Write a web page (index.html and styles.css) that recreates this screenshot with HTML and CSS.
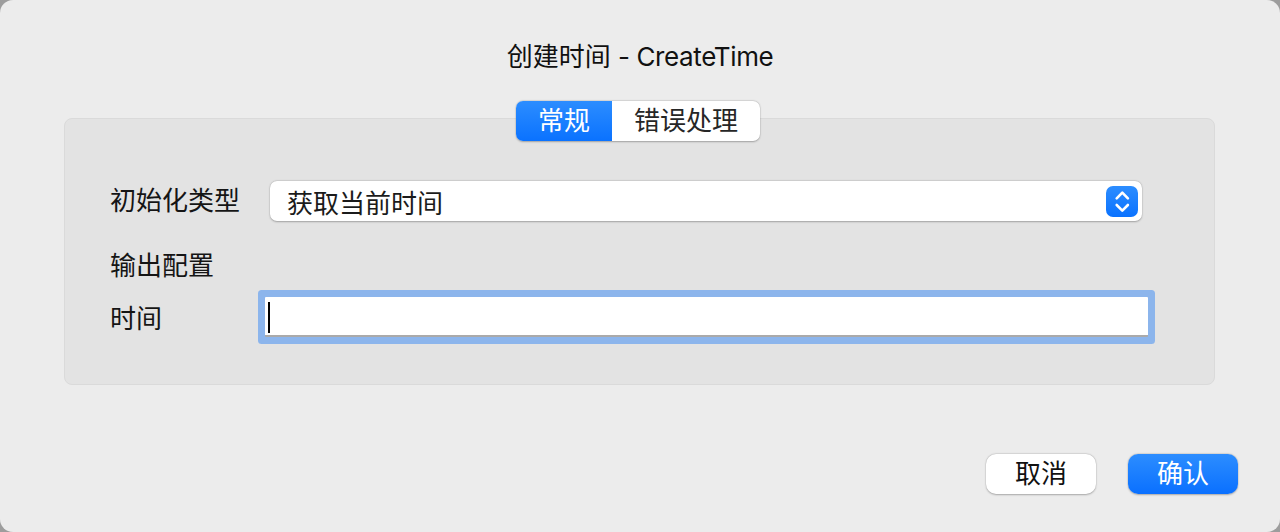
FILE: index.html
```html
<!DOCTYPE html>
<html lang="zh">
<head>
<meta charset="utf-8">
<link rel="stylesheet" href="styles.css">
</head>
<body>
<div class="window">
  <div class="title">创建时间 <span class="latin">- CreateTime</span></div>
  <div class="tabs">
    <div class="tab active">常规</div>
    <div class="tab">错误处理</div>
  </div>
  <div class="panel">
    <div class="row">
      <div class="label label-wide">初始化类型</div>
      <div class="select">
        <span class="select-text">获取当前时间</span>
        <span class="stepper">
          <svg width="32" height="31" viewBox="0 0 32 31">
            <polyline points="10.7,12.3 16.3,6.7 21.9,12.3" fill="none" stroke="#fff" stroke-width="2.6" stroke-linecap="round" stroke-linejoin="round"/>
            <polyline points="10.7,19 16.3,24.6 21.9,19" fill="none" stroke="#fff" stroke-width="2.6" stroke-linecap="round" stroke-linejoin="round"/>
          </svg>
        </span>
      </div>
    </div>
    <div class="section">输出配置</div>
    <div class="row row-input">
      <div class="label label-narrow">时间</div>
      <div class="input"><span class="caret"></span></div>
    </div>
  </div>
  <div class="buttons">
    <div class="btn">取消</div>
    <div class="btn primary">确认</div>
  </div>
</div>
</body>
</html>
```
FILE: styles.css
```css
html, body {
  margin: 0;
  padding: 0;
  background: #9d9d9d;
}
body {
  width: 1280px;
  height: 532px;
  overflow: hidden;
  font-family: Inter, "Noto Sans CJK SC", sans-serif;
  font-size: 26px;
  color: #1b1b1b;
}
.window {
  width: 1280px;
  height: 532px;
  background: #ececec;
  border-radius: 13px;
  display: flex;
  flex-direction: column;
  box-sizing: border-box;
}
.title {
  margin-top: 42px;
  height: 30px;
  line-height: 30px;
  text-align: center;
  color: #111;
}
.latin {
  letter-spacing: -0.4px;
}
.tabs {
  margin: 29px auto -23px;
  display: flex;
  position: relative;
  z-index: 1;
  height: 40px;
  border-radius: 7px;
  background: #fff;
  box-shadow: 0 0.5px 2px rgba(0,0,0,0.28), 0 0 0 0.5px rgba(0,0,0,0.06);
  transform: translateX(-2px);
}
.tab {
  height: 40px;
  line-height: 40px;
  text-align: center;
  color: #262626;
  width: 148px;
}
.tab.active {
  width: 96px;
  color: #fff;
  border-radius: 7px 0 0 7px;
  background: linear-gradient(#2c8dff, #0a72ff);
}
.panel {
  margin: 0 65px 0 64px;
  height: 267px;
  box-sizing: border-box;
  background: #e3e3e3;
  border: 1px solid #dadada;
  border-radius: 8px;
  padding: 62px 0 0 45px;
}
.row {
  display: flex;
  align-items: center;
  height: 40px;
}
.label {
  line-height: 30px;
  color: #151515;
}
.label-wide { width: 160px; }
.label-narrow { width: 155px; padding-top: 4px; }
.select {
  width: 872px;
  height: 40px;
  box-sizing: border-box;
  background: #fff;
  border-radius: 7px;
  box-shadow: 0 0.5px 2px rgba(0,0,0,0.28), 0 0 0 0.5px rgba(0,0,0,0.05);
  display: flex;
  align-items: center;
  justify-content: space-between;
  padding: 0 4px 0 17px;
}
.select-text { color: #1b1b1b; }
.stepper {
  width: 32px;
  height: 31px;
  border-radius: 7px;
  background: linear-gradient(#2c8dff, #0a72ff);
  display: flex;
}
.section {
  margin-top: 30px;
  height: 30px;
  line-height: 30px;
  color: #151515;
}
.row-input {
  margin-top: 16px;
}
.input {
  width: 883px;
  height: 40px;
  box-sizing: border-box;
  background: #fff;
  border-bottom: 2px solid #aaa;
  box-shadow: 0 0 0 7px #8cb5ec;
  border-radius: 1px;
  display: flex;
  align-items: center;
  padding-left: 3px;
}
.caret {
  width: 2px;
  height: 31px;
  background: #000;
  margin-top: 2px;
}
.buttons {
  margin-top: 69px;
  display: flex;
  justify-content: flex-end;
  gap: 32px;
  padding-right: 42px;
}
.btn {
  width: 110px;
  height: 40px;
  line-height: 40px;
  text-align: center;
  border-radius: 10px;
  background: #fff;
  color: #111;
  box-shadow: 0 0.5px 2px rgba(0,0,0,0.28), 0 0 0 0.5px rgba(0,0,0,0.05);
}
.btn.primary {
  color: #fff;
  background: linear-gradient(#2c8dff, #0a70ff);
}
```
